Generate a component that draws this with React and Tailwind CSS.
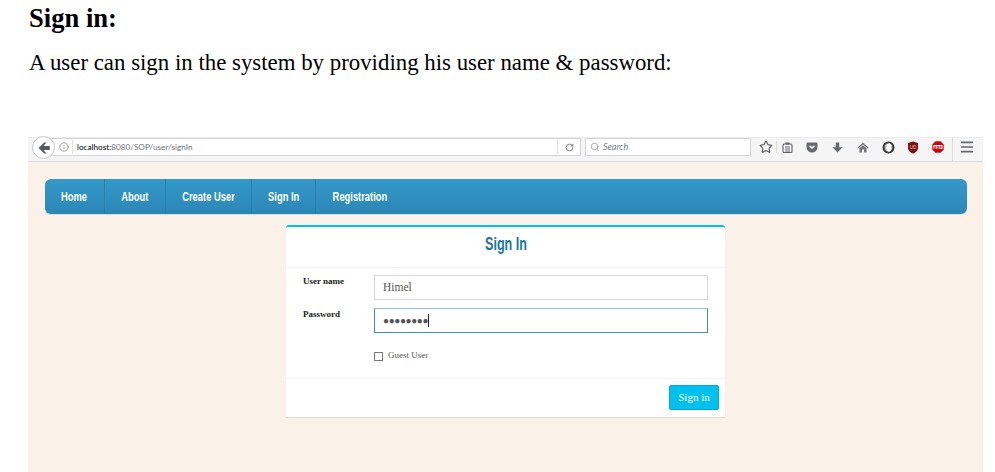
import React from "react";
import { Info, RotateCw, Search, Star, Menu } from "lucide-react";

const navItems = [
  { label: "Home", width: "w-[60px]" },
  { label: "About", width: "w-[61px]" },
  { label: "Create User", width: "w-[86px]" },
  { label: "Sign In", width: "w-[64px]" },
  { label: "Registration", width: "w-[88px]" },
];

const BrowserBar = () => (
  <div className="h-[25px] bg-[#f5f5f6] border-b border-[#dcdcde] border-t border-t-[#ececee] flex items-center relative pr-[3px] pb-[5px]">
    {/* Back button sits over the url box */}
    <div className="absolute left-[4px] top-[-2px] w-[23px] h-[23px] rounded-full bg-white border border-[#c4c6cc] flex items-center justify-center z-10">
      <svg width="14" height="14" viewBox="0 0 14 14">
        <path d="M7.2 1.5 L1.5 7 L7.2 12.5 L9.4 12.5 L6.6 8.9 L12.8 8.9 L12.8 5.1 L6.6 5.1 L9.4 1.5 Z" fill="#55585e" />
      </svg>
    </div>

    {/* Url box */}
    <div className="ml-[12px] w-[541px] h-[18px] bg-white border border-[#d4d5dc] flex items-center pl-[18px] font-['Lato',sans-serif] text-[8.2px] text-[#6f7378]">
      <Info size={10} strokeWidth={1.5} className="text-[#66696e] shrink-0" />
      <span className="ml-[3px] mr-[4px] h-[14px] border-l border-[#e2e2e6]" />
      <span className="text-black">localhost:</span>
      <span>8080/SOP/user/signIn</span>
      <span className="ml-auto h-[14px] border-l border-[#dddde0] w-[23px] flex items-center justify-center">
        <RotateCw size={9} strokeWidth={2} className="text-[#55585e]" />
      </span>
    </div>

    {/* Search box */}
    <div className="ml-[4px] w-[166px] h-[18px] bg-white border border-[#d4d5dc] flex items-center pl-[4px] gap-[3px]">
      <Search size={10} strokeWidth={1.5} className="text-[#7a7d82]" />
      <span className="font-['Lato',sans-serif] italic text-[9px] text-[#777a88]">Search</span>
    </div>

    {/* Toolbar icons */}
    <div className="ml-[8px] flex items-center h-full flex-1">
      <Star size={14} strokeWidth={1.8} className="text-[#55585e]" />
      <span className="ml-[3px] h-[12px] border-l border-[#dcdcde]" />
      <svg width="11" height="11" viewBox="0 0 11 11" className="ml-[5px]">
        <rect x="1" y="2" width="9" height="8.5" rx="1" fill="none" stroke="#606368" strokeWidth="1.1" />
        <rect x="3.5" y="0.5" width="4" height="2" fill="#606368" />
        <path d="M3 5h5M3 7h5M3 9h5" stroke="#606368" strokeWidth="0.9" />
      </svg>
      <svg width="12" height="11" viewBox="0 0 12 11" className="ml-[13px]">
        <path d="M1.5 0.5h9a1 1 0 0 1 1 1v3.5a5.5 5.5 0 0 1-11 0V1.5a1 1 0 0 1 1-1Z" fill="#66696e" />
        <path d="M3.5 3.7 L6 6 L8.5 3.7" fill="none" stroke="#fff" strokeWidth="1.4" />
      </svg>
      <svg width="11" height="11" viewBox="0 0 11 11" className="ml-[14px]">
        <path d="M3.8 0.5h3.4v4.7h3.3L5.5 10.5 0.5 5.2h3.3Z" fill="#66696e" />
      </svg>
      <svg width="12" height="11" viewBox="0 0 12 11" className="ml-[14px]">
        <path d="M6 0.5 L11.8 5.8 L10.8 6.6 L6 2.4 L1.2 6.6 L0.2 5.8 Z M2.4 6.3 L6 3.2 L9.6 6.3 V10.5 H7 V7.5 H5 V10.5 H2.4 Z" fill="#77797e" />
      </svg>
      <svg width="13" height="13" viewBox="0 0 13 13" className="ml-[13px]">
        <circle cx="6.5" cy="6.5" r="5" fill="#bdbdbd" stroke="#333" strokeWidth="2" />
        <ellipse cx="6.9" cy="6.5" rx="2.4" ry="4.2" fill="#fff" />
      </svg>
      <svg width="12" height="13" viewBox="0 0 12 13" className="ml-[12px]">
        <path d="M6 0.5 L11 2 V7 C11 10 8 12 6 12.5 C4 12 1 10 1 7 V2 Z" fill="#800f14" />
        <text x="6" y="7.5" textAnchor="middle" fontSize="4.5" fill="#e8c8c8" fontFamily="Liberation Sans">UD</text>
      </svg>
      <svg width="12" height="12" viewBox="0 0 12 12" className="ml-[13px]">
        <path d="M3.5 0.3h5L11.7 3.5v5L8.5 11.7h-5L0.3 8.5v-5Z" fill="#d40008" />
        <rect x="1.5" y="4" width="9" height="4" fill="#fff" />
        <text x="6" y="7.5" textAnchor="middle" fontSize="4" fontWeight="700" fill="#d40008" fontFamily="Liberation Sans">ABP</text>
      </svg>
      <span className="ml-[8px] h-[23px] mt-[5px] border-l border-[#dcdcde]" />
      <Menu size={16} strokeWidth={2.6} className="text-[#66696e] ml-[6px]" />
    </div>
  </div>
);

const Navbar = () => (
  <div className="ml-[17px] mr-[16px] h-[35px] rounded-[6px] bg-gradient-to-b from-[#3398c9] to-[#2c87b6] flex shadow-[0_1px_1px_rgba(0,0,0,0.1)]">
    {navItems.map((item, i) => (
      <div
        key={item.label}
        className={`${item.width} flex items-center justify-center text-white font-bold text-[13px] font-['Liberation_Sans',sans-serif] ${
          i < navItems.length - 1 ? "border-r border-[#2a7fab]" : ""
        }`}
      >
        <span className="block whitespace-nowrap scale-x-[0.72]">{item.label}</span>
      </div>
    ))}
  </div>
);

const SignInCard = () => (
  <div className="ml-[258px] mt-[11px] w-[439px] h-[192px] bg-white border-t-[2px] border-[#00c0ef] rounded-t-[3px] shadow-[0_1px_1px_rgba(0,0,0,0.1)] flex flex-col">
    <div className="h-[41px] pb-[5px] border-b border-[#f4f4f4] flex items-center justify-center text-[#21759f] font-bold text-[18px] font-['Liberation_Sans',sans-serif]">
      <span className="block whitespace-nowrap scale-x-[0.7]">Sign In</span>
    </div>

    <div className="flex-1 pt-[7px] pl-[17px] font-['Liberation_Serif',serif]">
      <div className="flex">
        <label className="w-[71px] pt-[1px] text-[9px] font-bold text-[#222] leading-[10px]">User name</label>
        <div className="w-[334px] h-[25px] border border-[#d5d6de] flex items-center pl-[8px] text-[11.5px] text-[#555]">
          Himel
        </div>
      </div>
      <div className="flex mt-[8px]">
        <label className="w-[71px] pt-[1px] text-[9px] font-bold text-[#222] leading-[10px]">Password</label>
        <div className="w-[334px] h-[25px] border border-[#3c8dbc] border-t-[#93c4df] flex items-center pl-[8px] text-[10px] text-[#555]">
          <span className="tracking-[-0.4px]">●●●●●●●●</span>
          <span className="w-px h-[13px] bg-[#222]" />
        </div>
      </div>
      <div className="flex items-center mt-[16px] ml-[71px] gap-[5px] text-[9px] text-[#555]">
        <span className="w-[9px] h-[9px] border border-[#767676] bg-white mt-[1px]" />
        Guest User
      </div>
    </div>

    <div className="h-[39px] border-t border-[#f4f4f4] flex items-center justify-end pr-[6px] pb-[1px]">
      <div className="w-[50px] h-[25px] bg-[#00c0ef] border border-[#00acd6] rounded-[2px] flex items-center justify-center text-white text-[11px] font-['Liberation_Serif',serif]">
        Sign in
      </div>
    </div>
  </div>
);

export default function App() {
  return (
    <div className="w-[995px] h-[472px] overflow-hidden bg-white flex flex-col">
      <div className="pl-[29px] pt-[3px] font-['Liberation_Serif',serif] text-black">
        <h1 className="text-[26.6px] font-bold leading-[30px]">Sign in:</h1>
        <p className="mt-[16px] text-[22.85px] leading-[27px]">
          A user can sign in the system by providing his user name &amp; password:
        </p>
      </div>

      <div className="ml-[28px] mt-[61px] w-[955px] flex-1 bg-[#faf2e8] flex flex-col">
        <BrowserBar />
        <div className="mt-[17px]">
          <Navbar />
          <SignInCard />
        </div>
      </div>
    </div>
  );
}
